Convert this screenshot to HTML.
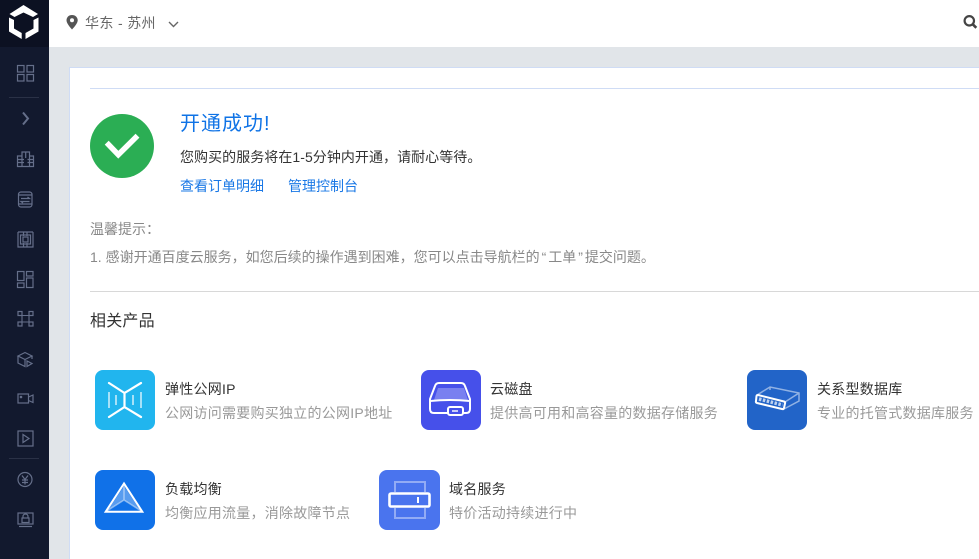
<!DOCTYPE html>
<html><head><meta charset="utf-8">
<style>
*{box-sizing:border-box}
html,body{margin:0;padding:0;width:979px;height:559px;overflow:hidden;background:#e1e5e9;font-family:"Liberation Sans","Noto Sans CJK SC",sans-serif}
.t{position:absolute;white-space:nowrap;line-height:20px}
.s{letter-spacing:.25px}
svg{position:absolute;display:block}
.ic{fill:none;stroke:#656f8a;stroke-width:1.2}
</style></head><body>
<div style="position:absolute;left:0;top:0;width:49px;height:559px;background:#12192e"></div>
<div style="position:absolute;left:0;top:0;width:49px;height:47px;background:#0c1122"></div>
<svg style="left:0;top:0" width="49" height="47" viewBox="0 0 49 47"><path d="M9.500 14L23.500 5L38 14L33 17L23.500 12.500L14.500 17ZM9 17.500L14 20V28.500L21.700 33V39L9 31.500ZM38.500 17.500L33.500 20V28.500L25.500 33V39L38.500 31.500Z" fill="#fff"/></svg>
<div style="position:absolute;left:9px;top:97px;width:30px;height:1px;background:#2a3146"></div>
<div style="position:absolute;left:9px;top:458px;width:30px;height:1px;background:#2a3146"></div>
<svg style="left:0;top:60px" width="49" height="480" viewBox="0 60 49 480" class="ic">
<rect x="17.500" y="65.500" width="6.500" height="6.500"/><rect x="27" y="65.500" width="6.500" height="6.500"/><rect x="17.500" y="74.500" width="6.500" height="6.500"/><rect x="27" y="74.500" width="6.500" height="6.500"/>
<path d="M23 112.500L28 118.500L23 124.500" stroke-width="2"/>
<path d="M17.500 166.500V156H22V152H29.500V156H33.500V166.500ZM22 156V166.500M29.500 156V166.500M18 159.500H24M18 162.500H24M27.500 159.500H33M27.500 162.500H33M25.700 152V158"/>
<rect x="18.500" y="192" width="13.500" height="15" rx="2.500"/><path d="M18.500 195H32M18.500 204H32M21 198.500H29.500L27.500 197M29.500 201.500H21L23 203"/>
<path d="M18 232H23.500V236M18 232V247H23.500V243M33 232H27V236M33 232V247H27V243M23.500 232H27M23.500 247H27"/><rect x="20.500" y="235" width="10" height="9"/><rect x="23" y="237" width="5" height="5"/>
<rect x="17.500" y="271.500" width="6.500" height="9"/><rect x="26.500" y="271.500" width="6.500" height="4.500"/><rect x="17.500" y="283" width="6.500" height="4.500"/><rect x="26.500" y="278" width="6.500" height="9.500"/>
<rect x="18" y="311.500" width="4" height="4"/><rect x="29" y="311.500" width="4" height="4"/><rect x="18" y="322" width="4" height="4"/><rect x="29" y="322" width="4" height="4"/><path d="M22 315.500H29V322H22Z" stroke-width="1.100"/>
<path d="M18 356L25 352.500L32 356L25 359.500ZM18 356V363L25 366.500V359.500M32 356V359M27 361V366.500L32 363.500Z"/>
<rect x="18" y="394" width="10.500" height="9"/><path d="M28.500 397L33 395V402.500L28.500 400.500"/><circle cx="21" cy="397" r=".7"/>
<rect x="18" y="431" width="15" height="15"/><path d="M23 434.500L29 438.500L23 442.500Z"/>
<circle cx="25" cy="479.500" r="7"/><path d="M22 475.500L25 479.500L28 475.500M25 479.500V484.500M22 480H28M22 482.500H28"/>
<rect x="18" y="513" width="15" height="11"/><path d="M19 526.500H32"/><rect x="22" y="518" width="7" height="4.500"/><path d="M23 518V516.500A2.500 2.500 0 0 1 28 516.500V518"/>
</svg>
<div style="position:absolute;left:49px;top:0;width:930px;height:47px;background:#fff"></div>
<svg style="left:66px;top:15px" width="12" height="15" viewBox="0 0 12 15"><path d="M6 0C2.700 0 .5 2.400 .5 5.300C.5 9 6 14.500 6 14.500C6 14.500 11.700 9 11.700 5.300C11.700 2.400 9.300 0 6 0Z" fill="#555"/><circle cx="6" cy="5.300" r="2" fill="#fff"/></svg>
<div class="t" style="left:85px;top:13px;font-size:14px;letter-spacing:.35px;color:#666">华东 - 苏州</div>
<svg style="left:168px;top:21px" width="11" height="7" viewBox="0 0 11 7"><path d="M1 1L5.500 5.500L10 1" fill="none" stroke="#666" stroke-width="1.400"/></svg>
<svg style="left:962px;top:14px" width="17" height="16" viewBox="0 0 17 16"><circle cx="7.300" cy="6.800" r="4.700" fill="none" stroke="#444" stroke-width="2.200"/><path d="M10.800 10.300L14.300 13.800" stroke="#444" stroke-width="2.600"/></svg>
<div style="position:absolute;left:69px;top:67px;width:910px;height:492px;background:#fff;border-left:1px solid #cfdcf5;border-top:1px solid #cfdcf5"></div>
<div style="position:absolute;left:90px;top:88px;width:889px;height:1px;background:#cfdcf5"></div>
<svg style="left:90px;top:114px" width="65" height="65" viewBox="0 0 65 65"><circle cx="32" cy="32" r="32" fill="#2bae54"/><path d="M16.700 28.700L28.300 40.700L47.500 21.700" fill="none" stroke="#fff" stroke-width="5.500"/></svg>
<div class="t" style="left:180px;top:112px;font-size:20px;line-height:24px;letter-spacing:1px;color:#0f73e6">开通成功!</div>
<div class="t" style="left:180px;top:147px;font-size:14px;letter-spacing:.05px;color:#333">您购买的服务将在1-5分钟内开通&#xFF0C;请耐心等待。</div>
<div class="t" style="left:180px;top:176px;font-size:14px;color:#1a78e6">查看订单明细</div>
<div class="t" style="left:288px;top:176px;font-size:14px;color:#1a78e6">管理控制台</div>
<div class="t" style="left:90px;top:219px;font-size:14px;color:#888">温馨提示&#xFF1A;</div>
<div class="t" style="left:90px;top:247px;font-size:14px;color:#888">1. 感谢开通百度云服务&#xFF0C;如您后续的操作遇到困难&#xFF0C;您可以点击导航栏的<span style="margin-left:2px;margin-right:2px">“</span>工单<span style="margin-left:2px;margin-right:2px">”</span>提交问题。</div>
<div style="position:absolute;left:90px;top:291px;width:889px;height:1px;background:#d8d8d8"></div>
<div class="t" style="left:90px;top:312px;font-size:16px;letter-spacing:.2px;color:#333">相关产品</div>

<svg style="left:95px;top:370px" width="60" height="60" viewBox="0 0 60 60"><rect width="60" height="60" rx="8" fill="#21b5ee"/><g fill="none" stroke="#fff" stroke-width="2"><path d="M14 13L29.500 23L46 13M14 47L29.500 37L46 47M29.500 23V37" stroke-linecap="round" stroke-width="2.200"/><path d="M14 22V38M21 25V35M38 25V35M46 22V38" stroke-opacity=".6"/></g></svg>
<div class="t s" style="left:165px;top:379px;font-size:14px;color:#333">弹性公网IP</div>
<div class="t s" style="left:165px;top:403px;font-size:14px;color:#999">公网访问需要购买独立的公网IP地址</div>

<svg style="left:421px;top:370px" width="60" height="60" viewBox="0 0 60 60"><rect width="60" height="60" rx="8" fill="#4650ea"/><g fill="none" stroke="#fff"><path d="M17 18H43L47 30H13Z" fill="#fff" fill-opacity=".28" stroke-width="0"/><path d="M20 13H40Q43 13 44 16L49 29V39Q49 43 45 43H13Q9 43 9 39V29L14 16Q15 13 18 13Z" stroke-width="2"/><path d="M9 31Q29 29 49 31" stroke-width="2"/><rect x="27" y="37" width="15" height="8" rx="2" fill="#4650ea" stroke-width="2"/><path d="M31 41H37" stroke-width="2" stroke-opacity=".7"/></g></svg>
<div class="t s" style="left:490px;top:379px;font-size:14px;color:#333">云磁盘</div>
<div class="t s" style="left:490px;top:403px;font-size:14px;color:#999">提供高可用和高容量的数据存储服务</div>

<svg style="left:747px;top:370px" width="60" height="60" viewBox="0 0 60 60"><rect width="60" height="60" rx="8" fill="#2264c8"/><path d="M10 25L23 17L52 23V31L37 39M23 17V20M52 23L38 32" fill="none" stroke="#fff" stroke-opacity=".5" stroke-width="1.500"/><path d="M11 25L37 31.500Q38.500 32 38 33.500L37 38Q36.500 39.500 35 39L10 33Q8.500 32.500 9 31L9.500 26Q10 24.800 11 25Z" fill="#2264c8" stroke="#fff" stroke-width="2"/><path d="M12 29L35.500 35" stroke="#fff" stroke-opacity=".7" stroke-width="3.500" stroke-dasharray="2.500 1.500"/></svg>
<div class="t s" style="left:817px;top:379px;font-size:14px;color:#333">关系型数据库</div>
<div class="t s" style="left:817px;top:403px;font-size:14px;color:#999">专业的托管式数据库服务</div>

<svg style="left:95px;top:470px" width="60" height="60" viewBox="0 0 60 60"><rect width="60" height="60" rx="8" fill="#1071e8"/><path d="M29 16L13 40L29 30L45 40Z" fill="#fff" fill-opacity=".3"/><path d="M29 15V30M11 41.500L29 30L47 41.500" stroke="#fff" stroke-opacity=".45" fill="none" stroke-width="1.500"/><path d="M29 13.500L10.700 41.700H47.300Z" fill="none" stroke="#fff" stroke-width="2"/></svg>
<div class="t s" style="left:165px;top:479px;font-size:14px;color:#333">负载均衡</div>
<div class="t s" style="left:165px;top:503px;font-size:14px;color:#999">均衡应用流量&#xFF0C;消除故障节点</div>

<svg style="left:379px;top:470px" width="61" height="60" viewBox="0 0 61 60"><rect width="61" height="60" rx="8" fill="#4a74ee"/><path d="M16 22V12H46V22M16 38V48H46V38" fill="none" stroke="#fff" stroke-opacity=".4" stroke-width="2"/><rect x="10.500" y="23.500" width="40" height="13" rx="1.500" fill="#4a74ee" stroke="#fff" stroke-width="2.600"/><path d="M39 27V33" stroke="#fff" stroke-width="2"/></svg>
<div class="t s" style="left:449px;top:479px;font-size:14px;color:#333">域名服务</div>
<div class="t s" style="left:449px;top:503px;font-size:14px;color:#999">特价活动持续进行中</div>
</body></html>
